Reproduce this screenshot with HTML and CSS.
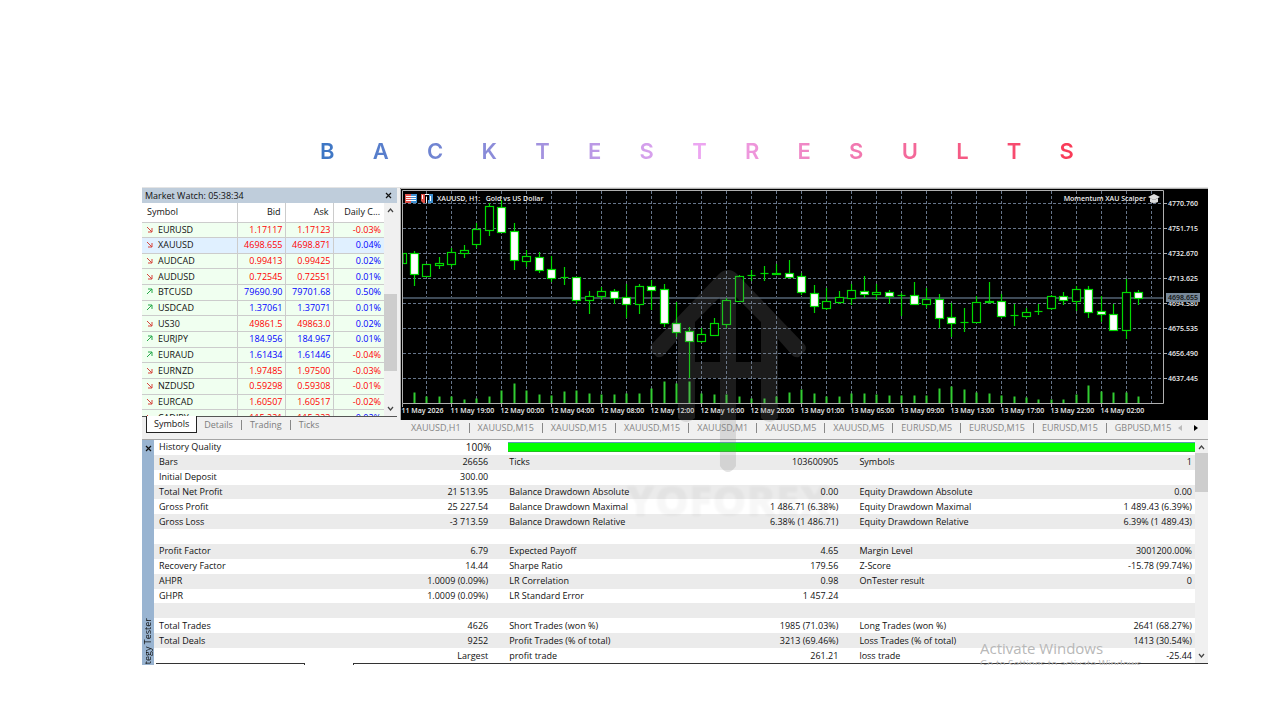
FILE: index.html
```html
<!DOCTYPE html>
<html lang="en">
  <head>
    <meta charset="UTF-8" />
    <meta name="viewport" content="width=device-width, initial-scale=1.0" />
    <title>Backtest Results</title>
    <link rel="stylesheet" href="styles.css">
  </head>
  <body>
    <h1 class="title">
      <span>B</span><span>A</span><span>C</span><span>K</span><span>T</span><span>E</span><span>S</span><span>T</span><span>R</span><span>E</span><span>S</span><span>U</span><span>L</span><span>T</span><span>S</span>
    </h1>

    <main class="terminal">
      <div class="top">
        <section class="market">
          <header class="market-title">
            <span>Market Watch: 05:38:34</span>
            <button class="close" aria-label="Close">
              <svg width="7" height="7" viewBox="0 0 7 7"><path d="M1 1l5 5M6 1l-5 5" /></svg>
            </button>
          </header>
          <div class="market-list">
            <table class="quotes">
              <thead>
                <tr><th>Symbol</th><th>Bid</th><th>Ask</th><th>Daily C...</th></tr>
              </thead>
              <tbody id="quotes"></tbody>
            </table>
            <div class="scrollbar">
              <svg width="7" height="5" viewBox="0 0 7 5"><path d="M1 4l2.500-3 2.500 3" /></svg>
              <div class="thumb market-thumb"></div>
              <svg width="7" height="5" viewBox="0 0 7 5"><path d="M1 1l2.500 3 2.500-3" /></svg>
            </div>
          </div>
          <nav class="market-tabs">
            <button class="active">Symbols</button>
            <button>Details</button>
            <button>Trading</button>
            <button>Ticks</button>
          </nav>
        </section>

        <section class="chart-panel">
          <svg id="chart" class="chart" viewBox="0 0 808 232"></svg>
          <nav class="chart-tabs">
            <div class="tab-list">
              <button>XAUUSD,H1</button>
              <button>XAUUSD,M15</button>
              <button>XAUUSD,M15</button>
              <button>XAUUSD,M15</button>
              <button>XAUUSD,M1</button>
              <button>XAUUSD,M5</button>
              <button>XAUUSD,M5</button>
              <button>EURUSD,M5</button>
              <button>EURUSD,M15</button>
              <button>EURUSD,M15</button>
              <button>GBPUSD,M15</button>
            </div>
            <button class="arrow off" aria-label="Previous"><svg width="4" height="6" viewBox="0 0 4 6"><path d="M4 0v6L0 3z" /></svg></button>
            <button class="arrow" aria-label="Next"><svg width="4" height="6" viewBox="0 0 4 6"><path d="M0 0v6l4-3z" /></svg></button>
          </nav>
        </section>
      </div>

      <section class="tester">
        <aside class="tester-side">
          <button class="close" aria-label="Close">
            <svg width="7" height="7" viewBox="0 0 7 7"><path d="M1 1l5 5M6 1l-5 5" /></svg>
          </button>
          <span>Strategy Tester</span>
        </aside>
        <div class="tester-body">
          <div class="tester-scroll">
            <table class="report">
              <colgroup>
                <col class="label"><col class="value"><col class="label"><col class="value"><col class="label"><col>
              </colgroup>
              <tbody>
                <tr><td>History Quality</td><td class="quality">100%</td><td colspan="4" class="quality-cell"><div class="quality-bar"></div></td></tr>
                <tr><td>Bars</td><td>26656</td><td>Ticks</td><td>103600905</td><td>Symbols</td><td>1</td></tr>
                <tr><td>Initial Deposit</td><td>300.00</td><td></td><td></td><td></td><td></td></tr>
                <tr><td>Total Net Profit</td><td>21 513.95</td><td>Balance Drawdown Absolute</td><td>0.00</td><td>Equity Drawdown Absolute</td><td>0.00</td></tr>
                <tr><td>Gross Profit</td><td>25 227.54</td><td>Balance Drawdown Maximal</td><td>1 486.71 (6.38%)</td><td>Equity Drawdown Maximal</td><td>1 489.43 (6.39%)</td></tr>
                <tr><td>Gross Loss</td><td>-3 713.59</td><td>Balance Drawdown Relative</td><td>6.38% (1 486.71)</td><td>Equity Drawdown Relative</td><td>6.39% (1 489.43)</td></tr>
                <tr><td colspan="6">&nbsp;</td></tr>
                <tr><td>Profit Factor</td><td>6.79</td><td>Expected Payoff</td><td>4.65</td><td>Margin Level</td><td>3001200.00%</td></tr>
                <tr><td>Recovery Factor</td><td>14.44</td><td>Sharpe Ratio</td><td>179.56</td><td>Z-Score</td><td>-15.78 (99.74%)</td></tr>
                <tr><td>AHPR</td><td>1.0009 (0.09%)</td><td>LR Correlation</td><td>0.98</td><td>OnTester result</td><td>0</td></tr>
                <tr><td>GHPR</td><td>1.0009 (0.09%)</td><td>LR Standard Error</td><td>1 457.24</td><td></td><td></td></tr>
                <tr><td colspan="6">&nbsp;</td></tr>
                <tr><td>Total Trades</td><td>4626</td><td>Short Trades (won %)</td><td>1985 (71.03%)</td><td>Long Trades (won %)</td><td>2641 (68.27%)</td></tr>
                <tr><td>Total Deals</td><td>9252</td><td>Profit Trades (% of total)</td><td>3213 (69.46%)</td><td>Loss Trades (% of total)</td><td>1413 (30.54%)</td></tr>
                <tr><td></td><td>Largest</td><td>profit trade</td><td>261.21</td><td>loss trade</td><td>-25.44</td></tr>
              </tbody>
            </table>
            <div class="scrollbar">
              <svg width="7" height="5" viewBox="0 0 7 5"><path d="M1 4l2.500-3 2.500 3" /></svg>
              <div class="thumb tester-thumb"></div>
              <svg width="7" height="5" viewBox="0 0 7 5"><path d="M1 1l2.500 3 2.500-3" /></svg>
            </div>
          </div>
          <div class="tester-foot"><i></i><i></i></div>
        </div>
      </section>

      <div class="watermark">
        <svg width="160" height="204" viewBox="0 0 160 204">
          <path fill-rule="evenodd" d="M80 0q-5 0-9 4L3 75q-2 3 0 6l6 6q3 1 6-1L30 69V148q8 8 17 0V108h25v88q8 12 16 0v-88h25v40q8 8 17 0V69l15 17q3 2 6 1l6-6q2-3 0-6L89 4q-4-4-9-4zM47 52l25-25v65H47zM88 27l25 25v40H88z" />
        </svg>
        <span>YOFOREX</span>
      </div>
      <div class="activate">
        <p>Activate Windows</p>
        <small>Go to Settings to activate Windows.</small>
      </div>
    </main>
    <script src="chart.js"></script>
  </body>
</html>
```
FILE: styles.css
```css
* {
  box-sizing: border-box;
}

body {
  margin: 0;
  background-color: #fff;
  color: #111;
  font-family: 'Open Sans', 'Noto Sans', sans-serif;
  font-size: 9px;
  line-height: 12px;
}

button {
  border: 0;
  padding: 0;
  background: none;
  font: inherit;
  color: inherit;
}

/* heading */
.title {
  display: flex;
  justify-content: space-between;
  margin: 137px 206px 22px 320px;
  font-family: Inter, sans-serif;
  font-size: 22px;
  font-weight: 600;
  line-height: 28px;
  color: transparent;
  background: linear-gradient(90deg, #3b76c4, #eca6f2 50%, #f93a56);
  -webkit-background-clip: text;
  background-clip: text;
}

.terminal {
  position: relative;
  margin: 0 72px 0 142px;
  overflow: hidden;
  border-top: 1px solid #e4e4e4;
  background-color: #f0f0f0;
}

.top {
  display: grid;
  grid-template-columns: 255px 1fr;
  gap: 3px;
  border-bottom: 1px solid #a5a5a5;
}

/* market watch */
.market-title {
  display: flex;
  justify-content: space-between;
  align-items: center;
  height: 15px;
  padding: 0 5px 0 3px;
  background-color: #bfcddb;
}

.close {
  display: flex;
}

.close path {
  stroke: #111;
  stroke-width: 1.2;
  fill: none;
}

.market-list {
  display: flex;
  height: 214px;
  overflow: hidden;
  border-bottom: 1px solid #555;
}

.quotes {
  flex: 1;
  height: 222px;
  border-collapse: collapse;
  table-layout: fixed;
  background-color: #fff;
}

.quotes th,
.quotes td {
  padding: 0 2px;
  text-align: right;
  border-right: 1px solid #ccc;
}

.quotes th {
  width: 48px;
  height: 19px;
  padding-right: 4px;
  font-weight: 400;
}

.quotes th:first-child {
  width: 95px;
  padding-left: 5px;
}

.quotes th:last-child {
  width: auto;
}

.quotes th:first-child,
.quotes td:first-child {
  text-align: left;
}

.quotes th:last-child,
.quotes td:last-child {
  border-right: 0;
}

.quotes td {
  border-top: 1px solid #ccc;
  background-color: #f0fff0;
}

.quotes tr.selected td {
  background-color: #e0f0ff;
}

.quotes td:first-child {
  padding-left: 4px;
}

.quotes td:last-child {
  padding-right: 3px;
}

.quotes svg {
  margin-right: 5px;
  fill: none;
}

.up {
  color: #0000ff;
}

.down {
  color: #ff0000;
}

.icon-up {
  stroke: #27a84a;
}

.icon-down {
  stroke: #d6453d;
}

.scrollbar {
  display: flex;
  flex-direction: column;
  align-items: center;
  width: 13px;
  padding: 5px 0;
  background-color: #f0f0f0;
}

.scrollbar path {
  fill: none;
  stroke: #444;
  stroke-width: 1.2;
}

.scrollbar svg:last-child {
  margin-top: auto;
}

.thumb {
  width: 100%;
  background-color: #cdcdcd;
}

.market-thumb {
  height: 77px;
  margin-top: 81px;
}

.market-tabs {
  display: flex;
  align-items: center;
  height: 22px;
  padding: 0 4px 6px;
  color: #7c7c7c;
}

.market-tabs button {
  padding: 0 8px;
  border-right: 1px solid #888;
  line-height: 10px;
}

.market-tabs .active {
  height: 17px;
  margin-top: -1px;
  padding: 0 7px;
  background-color: #fff;
  color: #111;
  border: 1px solid #222;
  border-top: 0;
}

.market-tabs button:nth-child(2) {
  padding-left: 7px;
}

.market-tabs button:last-child {
  border-right: 0;
}

/* chart */
.chart-panel {
  min-width: 0;
}

.chart {
  display: block;
  width: 100%;
  background-color: #000;
}

.chart text {
  font-size: 7px;
  font-weight: 600;
  fill: #eee;
}

.grid-line {
  stroke: #66758a;
  stroke-dasharray: 3 2;
}

.bid-line {
  stroke: #3e4a57;
}

.frame {
  fill: none;
  stroke: #b0b0b0;
}

.candle {
  stroke: #00d800;
  stroke-width: 1.2;
  fill: #000;
}

.candle.fall rect {
  fill: #fff;
}

.volume {
  fill: #32cd32;
}

.chart .bid-label {
  fill: #111;
}

.chart-tabs {
  display: flex;
  align-items: center;
  height: 19px;
  padding: 0 4px 4px 3px;
  color: #868686;
}

.tab-list {
  display: flex;
  flex: 1;
  min-width: 0;
  overflow: hidden;
}

.tab-list button {
  flex: none;
  padding: 0 8px;
  border-right: 1px solid #888;
  line-height: 10px;
}

.tab-list button:last-child {
  padding-right: 0;
  border-right: 0;
}

.arrow {
  width: 16px;
}

.arrow.off {
  fill: #bbb;
}

/* strategy tester */
.tester {
  display: flex;
  height: 225px;
  background-color: #fff;
}

.tester-side {
  display: flex;
  flex-direction: column;
  align-items: center;
  width: 12px;
  padding-top: 5px;
  overflow: hidden;
  background-color: #99b4d1;
}

.tester-side span {
  margin-top: auto;
  margin-bottom: -16px;
  writing-mode: vertical-rl;
  transform: rotate(180deg);
}

.tester-body {
  flex: 1;
  min-width: 0;
}

.tester-scroll {
  display: flex;
  height: 223px;
}

.report {
  flex: 1;
  height: 223px;
  border-collapse: collapse;
  table-layout: fixed;
}

.report .label {
  width: 20%;
}

.report .value {
  width: 142px;
}

.report tr:nth-child(even) {
  background-color: #ebebeb;
}

.report td {
  padding: 0 16px 0 5px;
  white-space: nowrap;
}

.report td:nth-child(even) {
  padding-left: 0;
  text-align: right;
}

.report td:last-child {
  padding-right: 3px;
}

.report .quality {
  padding-right: 13px;
  font-size: 10px;
}

.report .quality-cell {
  padding: 0 0 0 4px;
}

.report .quality-cell:last-child {
  padding-right: 0;
}

.quality-bar {
  height: 10px;
  background-color: #00ff00;
  border-top: 1px solid #5a9bb0;
  border-bottom: 1px solid #20c020;
}

.tester-thumb {
  height: 39px;
  margin-top: 3px;
}

.tester-foot {
  display: flex;
  gap: 48px;
  height: 2px;
  padding-left: 2px;
}

.tester-foot i {
  width: 149px;
  border-top: 1px solid #333;
  border-right: 1px solid #333;
}

.tester-foot i:last-child {
  flex: 1;
  border-right: 0;
  border-left: 1px solid #333;
}

/* overlays */
.watermark {
  position: absolute;
  top: 82px;
  left: 55%;
  display: flex;
  flex-direction: column;
  align-items: center;
  transform: translateX(-50%);
  pointer-events: none;
}

.watermark svg {
  fill: rgba(128, 128, 128, 0.22);
}

.watermark span {
  margin-top: 8px;
  font-size: 43px;
  font-weight: 800;
  line-height: 36px;
  color: rgba(0, 0, 0, 0.03);
  filter: blur(1px);
}

.activate {
  position: absolute;
  right: 40px;
  bottom: 0;
  width: 188px;
  height: 26px;
  overflow: hidden;
  color: #b8b8b8;
  pointer-events: none;
}

.activate p {
  margin: 0;
  font-size: 15px;
  line-height: 18px;
}

.activate small {
  font-size: 10px;
  line-height: 14px;
  white-space: nowrap;
}
```
FILE: chart.js
```js
// symbol, direction, bid, ask, daily change
const quotes = [
  ['EURUSD', 'down', '1.17117', '1.17123', '-0.03%'],
  ['XAUUSD', 'down', '4698.655', '4698.871', '0.04%'],
  ['AUDCAD', 'down', '0.99413', '0.99425', '0.02%'],
  ['AUDUSD', 'down', '0.72545', '0.72551', '0.01%'],
  ['BTCUSD', 'up', '79690.90', '79701.68', '0.50%'],
  ['USDCAD', 'up', '1.37061', '1.37071', '0.01%'],
  ['US30', 'down', '49861.5', '49863.0', '0.02%'],
  ['EURJPY', 'up', '184.956', '184.967', '0.01%'],
  ['EURAUD', 'up', '1.61434', '1.61446', '-0.04%'],
  ['EURNZD', 'down', '1.97485', '1.97500', '-0.03%'],
  ['NZDUSD', 'down', '0.59298', '0.59308', '-0.01%'],
  ['EURCAD', 'down', '1.60507', '1.60517', '-0.02%'],
  ['CADJPY', 'down', '115.221', '115.223', '0.02%'],
];

const arrows = {
  up: 'M1 6L6 1M2 1h4v4',
  down: 'M1 1l5 5M6 2v4H2',
};

document.getElementById('quotes').innerHTML = quotes
  .map(([symbol, dir, bid, ask, change]) => {
    const changeDir = change[0] === '-' ? 'down' : 'up';
    return `<tr class="${symbol === 'XAUUSD' ? 'selected' : ''}">
      <td><svg class="icon-${dir}" width="7" height="7" viewBox="0 0 7 7"><path d="${arrows[dir]}" /></svg>${symbol}</td>
      <td class="${dir}">${bid}</td>
      <td class="${dir}">${ask}</td>
      <td class="${changeDir}">${change}</td>
    </tr>`;
  })
  .join('');

// high, body top, body bottom, low, falling, volume
const candles = [
  [65, 65, 75, 75, 0, 0], [63, 65, 86, 98, 1, 11], [76, 76, 88, 88, 0, 7], [69, 75, 77, 81, 0, 7],
  [60, 64, 76, 79, 0, 7], [57, 62, 65, 70, 0, 4], [35, 41, 56, 60, 0, 5], [15, 18, 42, 48, 0, 7],
  [12, 19, 44, 44, 1, 13], [35, 43, 72, 82, 1, 20], [62, 68, 73, 79, 0, 13], [64, 69, 82, 85, 1, 9],
  [68, 81, 90, 94, 1, 8], [79, 89, 89, 97, 0, 12], [89, 89, 112, 116, 1, 13], [103, 108, 112, 126, 0, 10],
  [99, 103, 108, 112, 0, 9], [101, 103, 110, 116, 1, 9], [96, 109, 116, 130, 1, 10], [96, 98, 116, 126, 0, 10],
  [92, 98, 102, 122, 1, 15], [96, 101, 135, 139, 1, 22], [114, 135, 144, 149, 1, 20], [139, 143, 153, 190, 1, 22],
  [140, 146, 153, 155, 0, 10], [130, 135, 147, 147, 0, 9], [110, 112, 136, 140, 0, 9], [87, 88, 113, 113, 0, 7],
  [82, 87, 87, 93, 0, 5], [78, 85, 85, 93, 0, 5], [76, 85, 86, 87, 0, 7], [72, 85, 89, 90, 1, 11],
  [85, 88, 104, 107, 1, 14], [97, 105, 118, 125, 1, 10], [100, 113, 120, 122, 0, 7], [103, 109, 114, 116, 0, 7],
  [96, 102, 110, 117, 0, 10], [88, 103, 106, 110, 1, 10], [96, 104, 106, 112, 0, 9], [102, 104, 108, 116, 1, 8],
  [105, 107, 107, 128, 0, 8], [94, 107, 116, 116, 1, 8], [100, 111, 116, 120, 0, 8], [106, 111, 130, 140, 1, 15],
  [115, 129, 135, 149, 1, 17], [120, 134, 134, 144, 0, 14], [108, 114, 134, 135, 0, 11], [94, 113, 114, 115, 0, 10],
  [106, 113, 128, 130, 1, 8], [116, 127, 127, 138, 0, 7], [120, 124, 128, 130, 0, 6], [116, 123, 123, 127, 0, 4],
  [107, 108, 120, 122, 0, 4], [104, 108, 112, 117, 1, 4], [98, 101, 113, 123, 0, 9], [98, 101, 124, 130, 1, 18],
  [108, 123, 126, 134, 1, 12], [116, 126, 142, 143, 1, 11], [91, 104, 142, 151, 0, 11], [102, 104, 110, 117, 1, 7],
];

const prices = ['4770.760', '4751.715', '4732.670', '4713.625', '4694.580', '4675.535', '4656.490', '4637.445'];
const times = [
  '11 May 2026', '11 May 19:00', '12 May 00:00', '12 May 04:00', '12 May 08:00',
  '12 May 12:00', '12 May 16:00', '12 May 20:00', '13 May 01:00', '13 May 05:00',
  '13 May 09:00', '13 May 13:00', '13 May 17:00', '13 May 22:00', '14 May 02:00',
];

const right = 763.5;
const bottom = 215.5;
const step = 12.49;
const candleX = (i) => Math.round(1.5 + i * step) + 0.5;
let svg = '';

// grid
for (let i = 2; i < 62; i += 2) {
  svg += `<line class="grid-line" x1="${candleX(i)}" x2="${candleX(i)}" y1="3" y2="${bottom}" />`;
}
prices.forEach((price, i) => {
  const y = 15.5 + i * 25;
  svg += `<line class="grid-line" x1="3" x2="${right}" y1="${y}" y2="${y}" />`;
  svg += `<line class="frame" x1="${right}" x2="767" y1="${y}" y2="${y}" />`;
  svg += `<text x="768" y="${y + 2}">${price}</text>`;
});
svg += `<line class="bid-line" x1="3" x2="${right}" y1="110" y2="110" stroke-width="2" />`;

// candles and volumes
candles.forEach(([high, top, low, min, fall, volume], i) => {
  const x = candleX(i);
  const left = i ? x - 4 : 3;
  // no body when the bar opened and closed at one price
  const body =
    top === low
      ? `<line x1="${x - 4}" x2="${x + 4}" y1="${top + 0.5}" y2="${top + 0.5}" />`
      : `<rect x="${left}" y="${top + 0.5}" width="${x + 4 - left}" height="${low - top}" />`;
  svg += `<g class="candle ${fall ? 'fall' : ''}">
    <line x1="${x}" x2="${x}" y1="${high}" y2="${min}" />
    ${body}
  </g>`;
  svg += `<rect class="volume" x="${x - 1}" y="${bottom - volume}" width="2" height="${volume}" />`;
});

// frame and time axis
svg += `<path class="frame" d="M0.500 232V0.500H808M2.500 ${bottom}V2.500H${right}V${bottom}z" />`;
times.forEach((time, i) => {
  const x = candleX(i * 4);
  svg += `<line class="frame" x1="${x}" x2="${x}" y1="${bottom}" y2="219" />`;
  svg += `<text x="${x - 1}" y="225">${time}</text>`;
});

svg += `<rect x="766" y="105" width="34" height="9" fill="#778899" />
  <text class="bid-label" x="768" y="112">4698.655</text>
  <text x="37" y="13">XAUUSD, H1:&#160;&#160; Gold vs US Dollar</text>
  <text x="746" y="13" text-anchor="end">Momentum XAU Scalper</text>`;

// header icons
svg += `<rect x="5" y="6" width="6" height="9" fill="#e0524a" /><rect x="11" y="6" width="6" height="9" fill="#3d8fd0" />
  <path d="M6 8.500h10M6 10.500h10M6 12.500h10" stroke="#fff" />
  <path d="M21 6h4v9h-2l-2-2z" fill="#e0524a" /><path d="M29 6h4v9h-5v-3h1z" fill="#3d8fd0" />
  <path d="M22.500 7v4M30.500 8v5M26.500 9v6" stroke="#fff" /><path d="M25 6.500h4" stroke="#fff" />
  <path d="M748 9l6-3 6 3-6 3z" fill="#ddd" /><path d="M750 10v4q4 2 8 0v-4l-4 2z" fill="#ddd" />`;

document.getElementById('chart').innerHTML = svg;
```
